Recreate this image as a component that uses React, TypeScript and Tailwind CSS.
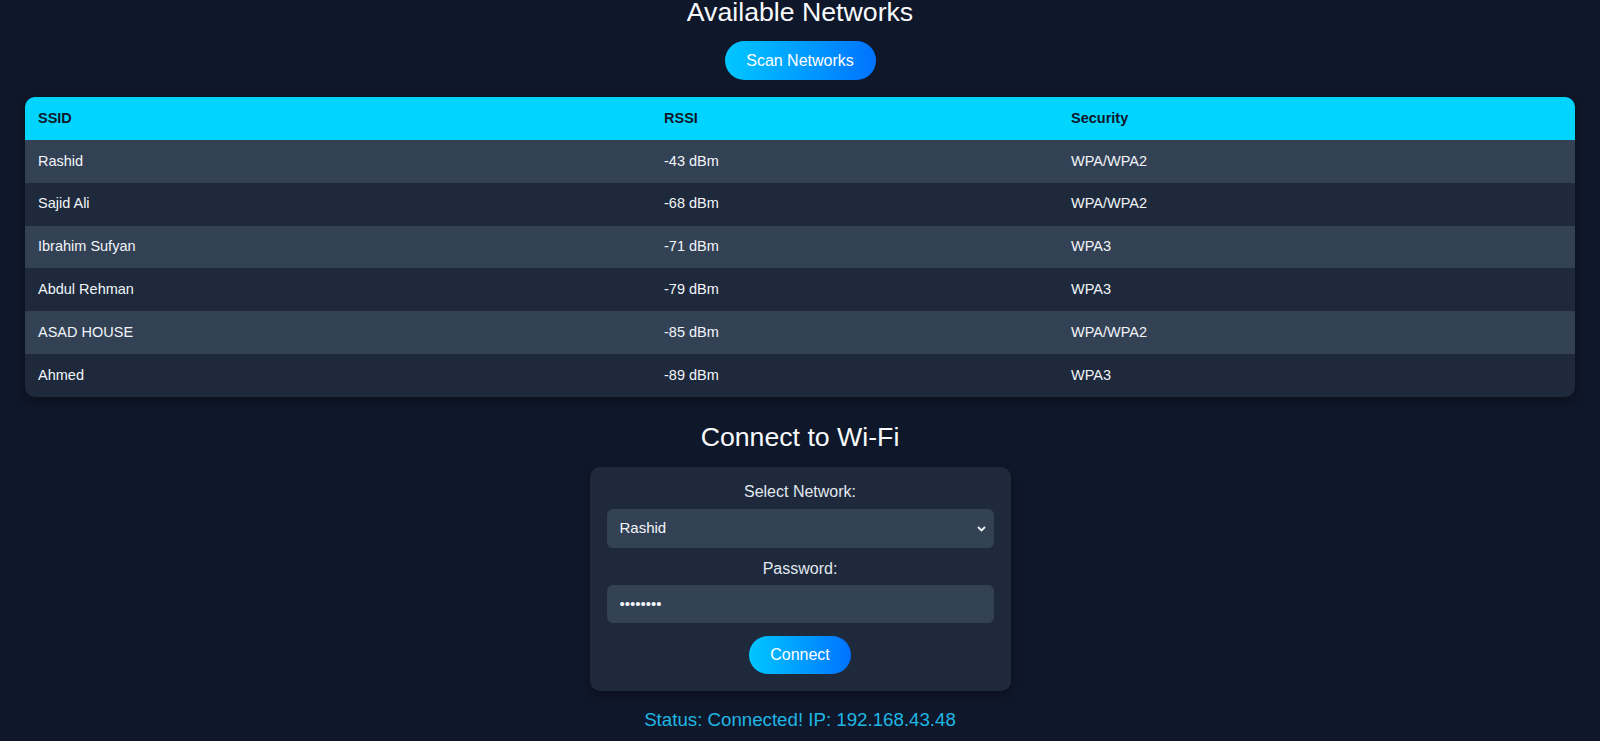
import { useState } from 'react'

const networks = [
  { ssid: 'Rashid', rssi: -43, security: 'WPA/WPA2' },
  { ssid: 'Sajid Ali', rssi: -68, security: 'WPA/WPA2' },
  { ssid: 'Ibrahim Sufyan', rssi: -71, security: 'WPA3' },
  { ssid: 'Abdul Rehman', rssi: -79, security: 'WPA3' },
  { ssid: 'ASAD HOUSE', rssi: -85, security: 'WPA/WPA2' },
  { ssid: 'Ahmed', rssi: -89, security: 'WPA3' },
]

const font = { fontFamily: '"Liberation Sans", Arial, sans-serif' }

export default function App() {
  const [selected, setSelected] = useState('Rashid')
  const [password, setPassword] = useState('12345678')

  return (
    <div className="min-h-screen w-full bg-[#0f172a] text-[#f1f5f9] overflow-hidden" style={font}>
      <div className="flex flex-col items-center px-[25px]">
        <h2 className="text-[26.7px] leading-[25px] font-normal text-[#f8fafc]">Available Networks</h2>

        <button className="mt-[16px] h-[39px] w-[151px] rounded-full bg-gradient-to-r from-[#00c6ff] to-[#0072ff] text-[16px] text-white">
          Scan Networks
        </button>

        {/* networks table */}
        <div className="mt-[17px] w-full overflow-hidden rounded-[10px] shadow-[0_4px_12px_rgba(0,0,0,0.35)]">
          <div className="grid h-[43px] grid-cols-[626px_407px_1fr] items-center bg-[#00d4ff] text-[14.5px] font-bold text-[#0f172a]">
            <div className="pl-[13px]">SSID</div>
            <div className="pl-[13px]">RSSI</div>
            <div className="pl-[13px]">Security</div>
          </div>
          {networks.map((n, i) => (
            <div key={n.ssid}
              className={`grid h-[42.8px] grid-cols-[626px_407px_1fr] items-center text-[14.5px] text-[#f1f5f9] ${i % 2 === 0 ? 'bg-[#334155]' : 'bg-[#1e293b]'}`}>
              <div className="pl-[13px]">{n.ssid}</div>
              <div className="pl-[13px]">{n.rssi} dBm</div>
              <div className="pl-[13px]">{n.security}</div>
            </div>
          ))}
        </div>

        <h2 className="mt-[25px] text-[26.7px] leading-[31px] font-normal text-[#f8fafc]">Connect to Wi-Fi</h2>

        <div className="mt-[14px] flex w-[421px] flex-col items-center rounded-[10px] bg-[#1e293b] px-[17px] pt-4 pb-[17px] shadow-[0_4px_12px_rgba(0,0,0,0.3)]">
          <label className="text-[16px] leading-[18px] text-[#e2e8f0]">Select Network:</label>
          <div className="relative mt-2 w-full">
            <select value={selected} onChange={e => setSelected(e.target.value)}
              className="h-[39px] w-full appearance-none rounded-[6px] bg-[#334155] pl-[13px] text-[15px] text-[#f1f5f9] outline-none" style={font}>
              {networks.map(n => <option key={n.ssid}>{n.ssid}</option>)}
            </select>
            <svg className="pointer-events-none absolute right-[8px] top-[17px]" width="9" height="6" viewBox="0 0 9 6">
              <path d="M1 1l3.5 3.5L8 1" fill="none" stroke="#f1f5f9" strokeWidth="1.8" />
            </svg>
          </div>

          <label className="mt-3 text-[16px] leading-[18px] text-[#e2e8f0]">Password:</label>
          <input type="password" value={password} onChange={e => setPassword(e.target.value)}
            className="mt-[7px] h-[38px] w-full rounded-[6px] bg-[#334155] pl-[13px] text-[15px] text-[#f1f5f9] outline-none" style={font} />

          <button className="mt-[13px] h-[38px] w-[102px] rounded-full bg-gradient-to-r from-[#00c6ff] to-[#0072ff] text-[16px] text-white">
            Connect
          </button>
        </div>

        <p className="mt-[18px] text-[18.7px] leading-[21px] text-[#1fb6e4]">Status: Connected! IP: 192.168.43.48</p>
      </div>
    </div>
  )
}
